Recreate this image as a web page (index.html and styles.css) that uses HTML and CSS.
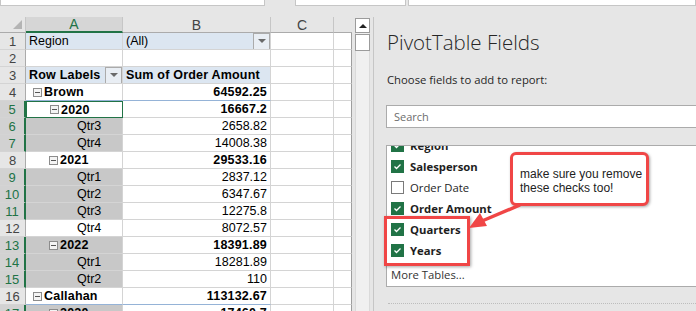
FILE: index.html
```html
<!DOCTYPE html>
<html lang="en">
<head>
  <meta charset="UTF-8">
  <meta name="viewport" content="width=device-width, initial-scale=1.0">
  <title>PivotTable Fields</title>
  <link rel="stylesheet" href="styles.css">
</head>
<body>
  <div class="app">
    <div class="topstrip">
      <div class="tbox tbox-name"></div>
      <div class="tbox tbox-mid"></div>
      <div class="tbox tbox-rest"></div>
    </div>

    <div class="main">
      <div class="sheetwrap">
        <div class="grid">
          <!-- column headers -->
          <div class="hd corner"><svg width="9" height="9" viewBox="0 0 9 9"><polygon points="9,0 9,9 0,9" fill="#b4b4b4"/></svg></div>
          <div class="hd col-sel">A</div>
          <div class="hd">B</div>
          <div class="hd">C</div>
          <div class="hd hd-last"></div>

          <div class="rh">1</div>
          <div class="c pv">Region</div>
          <div class="c pv">(All)<span class="dd"></span></div>
          <div class="c"></div><div class="c last"></div>

          <div class="rh">2</div>
          <div class="c"></div><div class="c"></div><div class="c"></div><div class="c last"></div>

          <div class="rh">3</div>
          <div class="c pv b">Row Labels<span class="dd"></span></div>
          <div class="c pv b">Sum of Order Amount</div>
          <div class="c"></div><div class="c last"></div>

          <div class="rh">4</div>
          <div class="c b l0 grp"><span class="tog"></span>Brown</div>
          <div class="c b num grp">64592.25</div>
          <div class="c"></div><div class="c last"></div>

          <div class="rh sel">5</div>
          <div class="c b l1 active"><span class="tog"></span>2020</div>
          <div class="c b num">16667.2</div>
          <div class="c"></div><div class="c last"></div>

          <div class="rh sel">6</div>
          <div class="c l2 pick">Qtr3</div>
          <div class="c num">2658.82</div>
          <div class="c"></div><div class="c last"></div>

          <div class="rh sel">7</div>
          <div class="c l2 pick">Qtr4</div>
          <div class="c num">14008.38</div>
          <div class="c"></div><div class="c last"></div>

          <div class="rh">8</div>
          <div class="c b l1"><span class="tog"></span>2021</div>
          <div class="c b num">29533.16</div>
          <div class="c"></div><div class="c last"></div>

          <div class="rh sel">9</div>
          <div class="c l2 pick">Qtr1</div>
          <div class="c num">2837.12</div>
          <div class="c"></div><div class="c last"></div>

          <div class="rh sel">10</div>
          <div class="c l2 pick">Qtr2</div>
          <div class="c num">6347.67</div>
          <div class="c"></div><div class="c last"></div>

          <div class="rh sel">11</div>
          <div class="c l2 pick">Qtr3</div>
          <div class="c num">12275.8</div>
          <div class="c"></div><div class="c last"></div>

          <div class="rh">12</div>
          <div class="c l2">Qtr4</div>
          <div class="c num">8072.57</div>
          <div class="c"></div><div class="c last"></div>

          <div class="rh sel">13</div>
          <div class="c b l1 pick"><span class="tog"></span>2022</div>
          <div class="c b num">18391.89</div>
          <div class="c"></div><div class="c last"></div>

          <div class="rh sel">14</div>
          <div class="c l2 pick">Qtr1</div>
          <div class="c num">18281.89</div>
          <div class="c"></div><div class="c last"></div>

          <div class="rh sel">15</div>
          <div class="c l2 pick">Qtr2</div>
          <div class="c num">110</div>
          <div class="c"></div><div class="c last"></div>

          <div class="rh">16</div>
          <div class="c b l0 grp"><span class="tog"></span>Callahan</div>
          <div class="c b num grp">113132.67</div>
          <div class="c"></div><div class="c last"></div>

          <div class="rh sel">17</div>
          <div class="c b l1 pick"><span class="tog"></span>2020</div>
          <div class="c b num">17460.7</div>
          <div class="c"></div><div class="c last"></div>
        </div>

        <div class="vscroll">
          <div class="sb-btn"><span class="up"></span></div>
          <div class="sb-thumb"></div>
        </div>
      </div>

      <div class="pane">
        <div class="pane-title">PivotTable Fields</div>
        <div class="pane-hint">Choose fields to add to report:</div>
        <div class="search">Search</div>

        <div class="fields">
          <div class="field on"><span class="chk"></span>Region</div>
          <div class="field on"><span class="chk"></span>Salesperson</div>
          <div class="field"><span class="chk"></span>Order Date</div>
          <div class="field on"><span class="chk"></span>Order Amount</div>
          <div class="field on"><span class="chk"></span>Quarters</div>
          <div class="field on"><span class="chk"></span>Years</div>
          <div class="more">More Tables...</div>
        </div>

        <div class="dots"></div>
      </div>
    </div>

    <!-- annotation drawn over the field list -->
    <div class="mark"></div>
    <div class="callout">make sure you remove<br>these checks too!</div>
    <svg class="arrow" width="696" height="311" viewBox="0 0 696 311">
      <line x1="520" y1="205" x2="482" y2="221" stroke="#f04646" stroke-width="3.5"/>
      <polygon points="469,228 487,226 480,213" fill="#f04646"/>
    </svg>
  </div>
</body>
</html>
```

FILE: styles.css
```css
* {
  box-sizing: border-box;
}

body {
  margin: 0;
  background: #e6e6e6;
  font-family: "Liberation Sans", Arial, sans-serif;
}

.app {
  position: relative;
  width: 696px;
  height: 311px;
  overflow: hidden;
}

/* strip of boxes cut off at the top */
.topstrip {
  display: flex;
  height: 17px;
}

.tbox {
  height: 6px;
  background: #fff;
  border: 1px solid #c6c6c6;
  border-top: none;
}

.tbox-name { width: 265px; }
.tbox-mid { width: 111px; margin-left: 30px; }
.tbox-rest { flex: 1; margin-left: 2px; }

.main {
  display: flex;
  height: 294px;
}

.sheetwrap {
  display: flex;
  width: 373px;
}

/* worksheet */
.grid {
  display: grid;
  grid-template-columns: 26px 97px 148px 63px 18px;
  grid-template-rows: 16px;
  grid-auto-rows: 17px;
  align-content: start;
  width: 352px;
  height: 294px;
  overflow: hidden;
  font-size: 12.5px;
  color: #000;
}

.hd {
  display: flex;
  align-items: center;
  justify-content: center;
  background: #e6e6e6;
  border-right: 1px solid #c6c6c6;
  border-bottom: 1px solid #ababab;
  font-size: 14px;
  color: #444;
}

.hd.corner {
  justify-content: flex-end;
  align-items: flex-end;
  padding: 0 3px 3px 0;
}

.hd.col-sel {
  background: #d6d6d6;
  color: #217346;
  border-bottom: 2px solid #217346;
}

.hd.hd-last {
  border-right: none;
}

.rh {
  display: flex;
  align-items: center;
  justify-content: center;
  background: #e6e6e6;
  border-right: 1px solid #ababab;
  border-bottom: 1px solid #d4d4d4;
  font-size: 13px;
  color: #444;
}

.rh.sel {
  background: #d2d2d2;
  color: #217346;
  border-right: 2px solid #217346;
}

.c {
  display: flex;
  align-items: center;
  background: #fff;
  border-right: 1px solid #d4d4d4;
  border-bottom: 1px solid #d4d4d4;
  padding: 0 3px;
  white-space: nowrap;
  overflow: hidden;
}

.c.last {
  border-right: 1px solid #9e9e9e;
}

.c.b { font-weight: bold; letter-spacing: 0.2px; }
.c.num { justify-content: flex-end; padding-right: 3px; }
.c.pv { background: #dce6f1; padding-left: 3px; }
.c.grp { border-bottom: 1px solid #95b3d7; }
.c.pick { background: #c8c8c8; }
.c.active { border: 1px solid #217346; }

.c.l0 { padding-left: 7px; }
.c.l1 { padding-left: 23px; }
.c.l2 { padding-left: 51px; }

.tog {
  position: relative;
  width: 9px;
  height: 9px;
  margin-right: 2px;
  border: 1px solid #8c8c8c;
  background: #f4f4f4;
  flex: none;
}

.tog::after {
  content: "";
  position: absolute;
  left: 1px;
  right: 1px;
  top: 3px;
  height: 1px;
  background: #555;
}

.dd {
  margin-left: auto;
  margin-right: -3px;
  width: 17px;
  height: 17px;
  border: 1px solid #ababab;
  background: #e9eef4;
  display: flex;
  align-items: center;
  justify-content: center;
  flex: none;
}

.dd::after {
  content: "";
  border-left: 4px solid transparent;
  border-right: 4px solid transparent;
  border-top: 4px solid #6a6a6a;
}

/* vertical scrollbar */
.vscroll {
  width: 15px;
  margin-left: 3px;
  margin-top: 1px;
  background: #f0f0f0;
  border-left: 1px solid #dadada;
  border-right: 1px solid #dadada;
}

.sb-btn,
.sb-thumb {
  margin: 0 -1px;
  background: #fff;
  border: 1px solid #9b9b9b;
}

.sb-btn {
  height: 15px;
  display: flex;
  align-items: center;
  justify-content: center;
}

.up {
  border-left: 4px solid transparent;
  border-right: 4px solid transparent;
  border-bottom: 4px solid #222;
}

.sb-thumb {
  height: 17px;
  margin-top: 1px;
}

/* field list pane */
.pane {
  flex: 1;
  display: flex;
  flex-direction: column;
  border-left: 1px solid #c6c6c6;
  padding-left: 12px;
  overflow: hidden;
  font-family: "Open Sans", "Noto Sans", sans-serif;
  color: #262626;
}

.pane-title {
  margin-top: 12px;
  font-size: 20.5px;
  font-weight: 300;
  line-height: 27px;
  padding-left: 1px;
}

.pane-hint {
  margin-top: 16px;
  font-size: 11.3px;
  line-height: 16px;
  padding-left: 1px;
}

.search {
  margin-top: 17px;
  margin-right: -20px;
  height: 23px;
  padding-left: 7px;
  display: flex;
  align-items: center;
  background: #fff;
  border: 1px solid #ababab;
  font-size: 11px;
  color: #6d6d6d;
}

.fields {
  margin-top: 17px;
  margin-right: -20px;
  height: 142px;
  background: #fff;
  border: 1px solid #ababab;
  overflow: hidden;
  font-size: 11.3px;
}

.field {
  display: flex;
  align-items: center;
  height: 21px;
  padding-left: 4px;
  color: #1e1e1e;
}

.field:first-child {
  margin-top: -11px;
}

.field.on {
  font-weight: bold;
}

.chk {
  width: 13px;
  height: 13px;
  margin-right: 6px;
  border: 1px solid #7a7a7a;
  background: #fff;
  flex: none;
}

.field.on .chk {
  border-color: #217346;
  background: #217346 url("data:image/svg+xml,%3Csvg xmlns='http://www.w3.org/2000/svg' width='11' height='11'%3E%3Cpolyline points='2.5,5.5 4.5,7.5 8.5,3.5' fill='none' stroke='white' stroke-width='1.3'/%3E%3C/svg%3E") center no-repeat;
}

.more {
  margin-top: 3px;
  height: 21px;
  padding-left: 4px;
  display: flex;
  align-items: center;
  color: #333;
}

.dots {
  margin-top: 16px;
  margin-left: 2px;
  margin-right: -20px;
  border-top: 1px dotted #bdbdbd;
}

/* annotation */
.mark {
  position: absolute;
  left: 384px;
  top: 216px;
  width: 86px;
  height: 50px;
  border: 3px solid #f04646;
  box-shadow: 1px 1px 3px rgba(0, 0, 0, 0.35);
}

.callout {
  position: absolute;
  left: 510px;
  top: 152px;
  width: 139px;
  height: 54px;
  padding: 12px 0 0 7px;
  background: #fff;
  border: 3px solid #f04646;
  border-radius: 6px;
  box-shadow: 1px 1px 3px rgba(0, 0, 0, 0.35);
  font-family: "Liberation Sans", Arial, sans-serif;
  font-size: 12px;
  line-height: 14px;
  color: #222;
}

.arrow {
  position: absolute;
  left: 0;
  top: 0;
  pointer-events: none;
}
```
